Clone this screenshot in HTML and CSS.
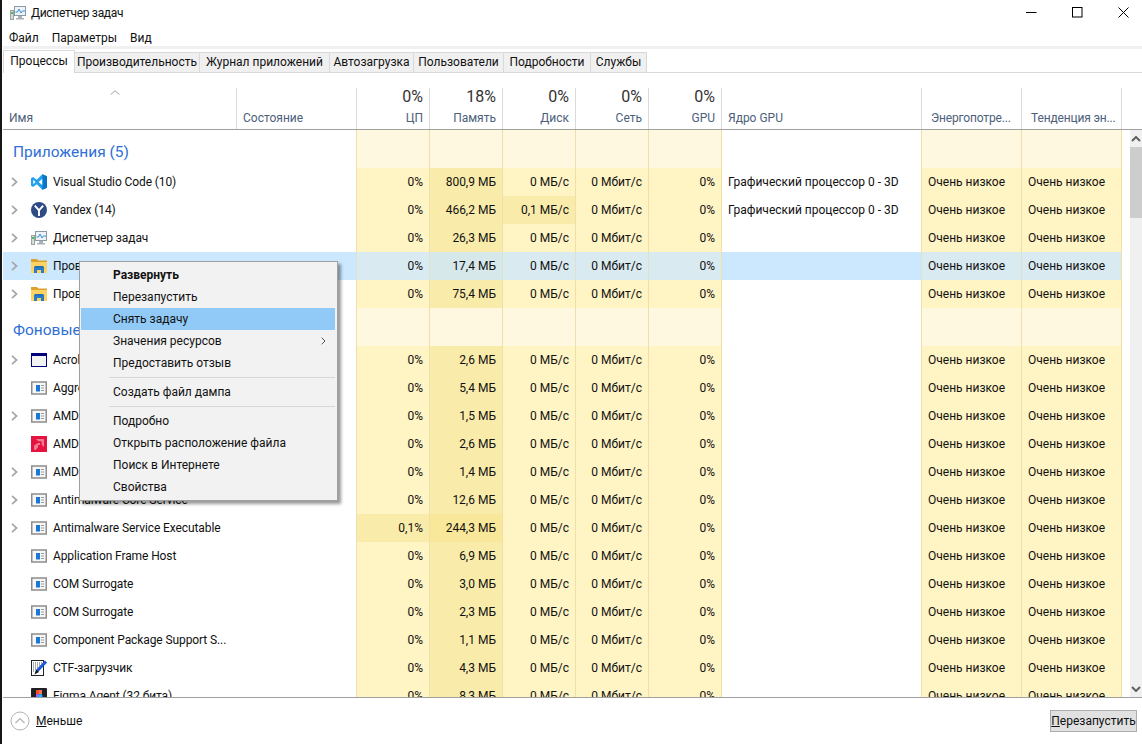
FILE: index.html
```html
<!DOCTYPE html>
<html lang="ru">
<head>
    <meta charset="UTF-8">
    <title>Диспетчер задач</title>
    <link rel="stylesheet" href="styles.css">
</head>
<body>
<!-- иконки -->
<svg class="sprite" xmlns="http://www.w3.org/2000/svg">
    <symbol id="chev" viewBox="0 0 7 10"><path d="M1 .8 5.600 5 1 9.200" fill="none" stroke="#a6a6a6" stroke-width="1.700"/></symbol>
    <symbol id="vscode" viewBox="0 0 100 100">
        <path fill-rule="evenodd" fill="#23a0f0" d="M71 1 36 36 13 19 0 26v48l13 7 23-17 35 35 29-13V14ZM72 29 47 50l25 21ZM14 36v28l14-14Z"/>
        <path fill="#0a76c8" d="M71 1l29 13v72L71 99l1-28V29Z"/>
    </symbol>
    <symbol id="yandex" viewBox="0 0 16 16">
        <circle cx="8" cy="8" r="8" fill="#2f4b85"/>
        <path d="M3.800 3.600 8 8.400l4.200-4.800M8 8.200V14" fill="none" stroke="#fff" stroke-width="1.900"/>
    </symbol>
    <symbol id="taskmgr" viewBox="0 0 16 16">
        <rect x="4.500" y="1.500" width="11" height="9" fill="#eef3f7" stroke="#8e9aa3"/>
        <path d="M5.500 7 7.500 7 9 4l2 4 1.500-2H15" fill="none" stroke="#3a90d6"/>
        <path d="M8 11h4v2h2v1.500H6V13h2Z" fill="#a9b2b8"/>
        <rect x=".5" y="5.500" width="3" height="9" fill="#d6dcd8" stroke="#9aa5a0"/>
        <rect x="1" y="7" width="2" height="2" fill="#3ec45a"/>
    </symbol>
    <symbol id="folder" viewBox="0 0 16 16">
        <path d="M0 1h6l2 2h8v12H0Z" fill="#fdd363"/>
        <path d="M0 1h6l1 1.500h9V4H0Z" fill="#d9a22e"/>
        <path d="M3 9h10v6h-3v-3H6v3H3Z" fill="#2a7cc9"/>
        <path d="M4 8h8l1 1.500H3Z" fill="#1d6ab3"/>
    </symbol>
    <symbol id="app" viewBox="0 0 16 16">
        <rect x=".75" y="2" width="14.500" height="12" fill="#f6f6f6" stroke="#8d8d8d" stroke-width="1.500"/>
        <rect x="5" y="5" width="4" height="6.500" fill="#1878d8"/>
        <path d="M10 5.500h3M10 8h3M10 10.500h3" stroke="#9a9a9a"/>
    </symbol>
    <symbol id="window" viewBox="0 0 16 16">
        <rect x="0" y="1" width="16" height="14" fill="#00007f"/>
        <rect x="1" y="4" width="14" height="10" fill="#f2f2f2"/>
    </symbol>
    <symbol id="amd" viewBox="0 0 16 16">
        <rect width="16" height="16" fill="#e4133f"/>
        <path d="M5 3h8v8l-2.300-2.300V5.300H7.300ZM7 7h2v2H7v2.500L4.500 14H3V9.500Z" fill="#f07a92"/>
    </symbol>
    <symbol id="ctf" viewBox="0 0 16 16">
        <rect x=".5" y=".5" width="12" height="15" fill="#fff" stroke="#222"/>
        <path d="M2 3h9M2 5h7M2 7h5M2 9h4M2 11h2" stroke="#555" stroke-dasharray="1 1"/>
        <path d="M15 1.500 6 11" stroke="#1c57d6" stroke-width="3"/>
        <path d="M3.500 14.500l1.500-5 3 2.500Z" fill="#111"/>
    </symbol>
    <symbol id="figma" viewBox="0 0 16 16">
        <rect width="16" height="16" rx="1" fill="#1f1f24"/>
        <rect x="5" y="2" width="3" height="4" fill="#f24e1e"/>
        <rect x="8" y="2" width="3" height="4" fill="#ff7262"/>
        <rect x="5" y="6" width="3" height="4" fill="#a259ff"/>
        <circle cx="9.500" cy="8" r="2" fill="#1abcfe"/>
        <rect x="5" y="10" width="3" height="4" fill="#0acf83"/>
    </symbol>
</svg>

<div class="window">
    <div class="titlebar">
        <div class="title">
            <svg class="ico"><use href="#taskmgr"/></svg>
            <span>Диспетчер задач</span>
        </div>
        <div class="winbtns">
            <svg width="11" height="11" viewBox="0 0 11 11"><path d="M0 5.500h10.500" stroke="#000"/></svg>
            <svg width="11" height="11" viewBox="0 0 11 11"><rect x=".5" y=".5" width="9.500" height="9.500" fill="none" stroke="#000"/></svg>
            <svg width="11" height="11" viewBox="0 0 11 11"><path d="M.5.500l10 10M10.500.500l-10 10" stroke="#000"/></svg>
        </div>
    </div>

    <div class="menubar">
        <span>Файл</span>
        <span>Параметры</span>
        <span>Вид</span>
    </div>

    <div class="tabs">
        <div class="tab active">Процессы</div>
        <div class="tab">Производительность</div>
        <div class="tab">Журнал приложений</div>
        <div class="tab">Автозагрузка</div>
        <div class="tab">Пользователи</div>
        <div class="tab">Подробности</div>
        <div class="tab">Службы</div>
    </div>

    <div class="head">
        <div class="hcell first">
            <svg class="sort" width="10" height="5" viewBox="0 0 10 5"><path d="M.5 4.500 5 .8l4.500 3.700" fill="none" stroke="#a8a8a8"/></svg>
            <div class="hlabel">Имя</div>
        </div>
        <div class="hcell"><div class="hlabel">Состояние</div></div>
        <div class="hcell right"><div class="hval">0%</div><div class="hlabel">ЦП</div></div>
        <div class="hcell right"><div class="hval">18%</div><div class="hlabel">Память</div></div>
        <div class="hcell right"><div class="hval">0%</div><div class="hlabel">Диск</div></div>
        <div class="hcell right"><div class="hval">0%</div><div class="hlabel">Сеть</div></div>
        <div class="hcell right"><div class="hval">0%</div><div class="hlabel">GPU</div></div>
        <div class="hcell"><div class="hlabel">Ядро GPU</div></div>
        <div class="hcell power"><div class="hlabel">Энергопотре...</div></div>
        <div class="hcell power last"><div class="hlabel">Тенденция эн...</div></div>
    </div>

    <div class="content">
        <div class="rows">
            <div class="row section">
                <div class="name"><span class="group">Приложения (5)</span></div><div></div>
                <div class="num"></div><div class="num"></div><div class="num"></div><div class="num"></div><div class="num"></div>
                <div class="engine"></div><div class="level"></div><div class="level end"></div>
            </div>
            <div class="row">
                <div class="name"><svg class="chev"><use href="#chev"/></svg><svg class="ico"><use href="#vscode"/></svg><span>Visual Studio Code (10)</span></div><div></div>
                <div class="num">0%</div><div class="num hot">800,9 МБ</div><div class="num">0 МБ/с</div><div class="num">0 Мбит/с</div><div class="num">0%</div>
                <div class="engine">Графический процессор 0 - 3D</div><div class="level">Очень низкое</div><div class="level end">Очень низкое</div>
            </div>
            <div class="row">
                <div class="name"><svg class="chev"><use href="#chev"/></svg><svg class="ico"><use href="#yandex"/></svg><span>Yandex (14)</span></div><div></div>
                <div class="num">0%</div><div class="num hot">466,2 МБ</div><div class="num hot">0,1 МБ/с</div><div class="num">0 Мбит/с</div><div class="num">0%</div>
                <div class="engine">Графический процессор 0 - 3D</div><div class="level">Очень низкое</div><div class="level end">Очень низкое</div>
            </div>
            <div class="row">
                <div class="name"><svg class="chev"><use href="#chev"/></svg><svg class="ico"><use href="#taskmgr"/></svg><span>Диспетчер задач</span></div><div></div>
                <div class="num">0%</div><div class="num hot">26,3 МБ</div><div class="num">0 МБ/с</div><div class="num">0 Мбит/с</div><div class="num">0%</div>
                <div class="engine"></div><div class="level">Очень низкое</div><div class="level end">Очень низкое</div>
            </div>
            <div class="row selected">
                <div class="name"><svg class="chev"><use href="#chev"/></svg><svg class="ico"><use href="#folder"/></svg><span>Проводник</span></div><div></div>
                <div class="num">0%</div><div class="num hot">17,4 МБ</div><div class="num">0 МБ/с</div><div class="num">0 Мбит/с</div><div class="num">0%</div>
                <div class="engine"></div><div class="level">Очень низкое</div><div class="level end">Очень низкое</div>
            </div>
            <div class="row">
                <div class="name"><svg class="chev"><use href="#chev"/></svg><svg class="ico"><use href="#folder"/></svg><span>Проводник</span></div><div></div>
                <div class="num">0%</div><div class="num hot">75,4 МБ</div><div class="num">0 МБ/с</div><div class="num">0 Мбит/с</div><div class="num">0%</div>
                <div class="engine"></div><div class="level">Очень низкое</div><div class="level end">Очень низкое</div>
            </div>
            <div class="row section">
                <div class="name"><span class="group">Фоновые процессы</span></div><div></div>
                <div class="num"></div><div class="num"></div><div class="num"></div><div class="num"></div><div class="num"></div>
                <div class="engine"></div><div class="level"></div><div class="level end"></div>
            </div>
            <div class="row">
                <div class="name"><svg class="chev"><use href="#chev"/></svg><svg class="ico"><use href="#window"/></svg><span>Acrobat Update Service</span></div><div></div>
                <div class="num">0%</div><div class="num hot">2,6 МБ</div><div class="num">0 МБ/с</div><div class="num">0 Мбит/с</div><div class="num">0%</div>
                <div class="engine"></div><div class="level">Очень низкое</div><div class="level end">Очень низкое</div>
            </div>
            <div class="row">
                <div class="name"><i class="chev"></i><svg class="ico"><use href="#app"/></svg><span>Aggregator Host</span></div><div></div>
                <div class="num">0%</div><div class="num hot">5,4 МБ</div><div class="num">0 МБ/с</div><div class="num">0 Мбит/с</div><div class="num">0%</div>
                <div class="engine"></div><div class="level">Очень низкое</div><div class="level end">Очень низкое</div>
            </div>
            <div class="row">
                <div class="name"><svg class="chev"><use href="#chev"/></svg><svg class="ico"><use href="#app"/></svg><span>AMD Crash Defender</span></div><div></div>
                <div class="num">0%</div><div class="num hot">1,5 МБ</div><div class="num">0 МБ/с</div><div class="num">0 Мбит/с</div><div class="num">0%</div>
                <div class="engine"></div><div class="level">Очень низкое</div><div class="level end">Очень низкое</div>
            </div>
            <div class="row">
                <div class="name"><i class="chev"></i><svg class="ico"><use href="#amd"/></svg><span>AMD Software</span></div><div></div>
                <div class="num">0%</div><div class="num hot">2,6 МБ</div><div class="num">0 МБ/с</div><div class="num">0 Мбит/с</div><div class="num">0%</div>
                <div class="engine"></div><div class="level">Очень низкое</div><div class="level end">Очень низкое</div>
            </div>
            <div class="row">
                <div class="name"><svg class="chev"><use href="#chev"/></svg><svg class="ico"><use href="#app"/></svg><span>AMD External Events</span></div><div></div>
                <div class="num">0%</div><div class="num hot">1,4 МБ</div><div class="num">0 МБ/с</div><div class="num">0 Мбит/с</div><div class="num">0%</div>
                <div class="engine"></div><div class="level">Очень низкое</div><div class="level end">Очень низкое</div>
            </div>
            <div class="row">
                <div class="name"><svg class="chev"><use href="#chev"/></svg><svg class="ico"><use href="#app"/></svg><span>Antimalware Core Service</span></div><div></div>
                <div class="num">0%</div><div class="num hot">12,6 МБ</div><div class="num">0 МБ/с</div><div class="num">0 Мбит/с</div><div class="num">0%</div>
                <div class="engine"></div><div class="level">Очень низкое</div><div class="level end">Очень низкое</div>
            </div>
            <div class="row">
                <div class="name"><svg class="chev"><use href="#chev"/></svg><svg class="ico"><use href="#app"/></svg><span>Antimalware Service Executable</span></div><div></div>
                <div class="num hot">0,1%</div><div class="num hotter">244,3 МБ</div><div class="num">0 МБ/с</div><div class="num">0 Мбит/с</div><div class="num">0%</div>
                <div class="engine"></div><div class="level">Очень низкое</div><div class="level end">Очень низкое</div>
            </div>
            <div class="row">
                <div class="name"><i class="chev"></i><svg class="ico"><use href="#app"/></svg><span>Application Frame Host</span></div><div></div>
                <div class="num">0%</div><div class="num hot">6,9 МБ</div><div class="num">0 МБ/с</div><div class="num">0 Мбит/с</div><div class="num">0%</div>
                <div class="engine"></div><div class="level">Очень низкое</div><div class="level end">Очень низкое</div>
            </div>
            <div class="row">
                <div class="name"><i class="chev"></i><svg class="ico"><use href="#app"/></svg><span>COM Surrogate</span></div><div></div>
                <div class="num">0%</div><div class="num hot">3,0 МБ</div><div class="num">0 МБ/с</div><div class="num">0 Мбит/с</div><div class="num">0%</div>
                <div class="engine"></div><div class="level">Очень низкое</div><div class="level end">Очень низкое</div>
            </div>
            <div class="row">
                <div class="name"><i class="chev"></i><svg class="ico"><use href="#app"/></svg><span>COM Surrogate</span></div><div></div>
                <div class="num">0%</div><div class="num hot">2,3 МБ</div><div class="num">0 МБ/с</div><div class="num">0 Мбит/с</div><div class="num">0%</div>
                <div class="engine"></div><div class="level">Очень низкое</div><div class="level end">Очень низкое</div>
            </div>
            <div class="row">
                <div class="name"><i class="chev"></i><svg class="ico"><use href="#app"/></svg><span>Component Package Support S...</span></div><div></div>
                <div class="num">0%</div><div class="num hot">1,1 МБ</div><div class="num">0 МБ/с</div><div class="num">0 Мбит/с</div><div class="num">0%</div>
                <div class="engine"></div><div class="level">Очень низкое</div><div class="level end">Очень низкое</div>
            </div>
            <div class="row">
                <div class="name"><i class="chev"></i><svg class="ico"><use href="#ctf"/></svg><span>CTF-загрузчик</span></div><div></div>
                <div class="num">0%</div><div class="num hot">4,3 МБ</div><div class="num">0 МБ/с</div><div class="num">0 Мбит/с</div><div class="num">0%</div>
                <div class="engine"></div><div class="level">Очень низкое</div><div class="level end">Очень низкое</div>
            </div>
            <div class="row">
                <div class="name"><i class="chev"></i><svg class="ico"><use href="#figma"/></svg><span>Figma Agent (32 бита)</span></div><div></div>
                <div class="num">0%</div><div class="num hot">8,3 МБ</div><div class="num">0 МБ/с</div><div class="num">0 Мбит/с</div><div class="num">0%</div>
                <div class="engine"></div><div class="level">Очень низкое</div><div class="level end">Очень низкое</div>
            </div>
        </div>
        <div class="scrollbar">
            <div class="sb-btn"><svg width="10" height="6" viewBox="0 0 10 6"><path d="M1 5 5 1l4 4" fill="none" stroke="#606060" stroke-width="2"/></svg></div>
            <div class="sb-thumb"></div>
            <div class="sb-track"></div>
            <div class="sb-btn"><svg width="10" height="6" viewBox="0 0 10 6"><path d="M1 1l4 4 4-4" fill="none" stroke="#606060" stroke-width="2"/></svg></div>
        </div>
    </div>

    <div class="footer">
        <div class="less">
            <svg width="20" height="20" viewBox="0 0 20 20"><circle cx="10" cy="10" r="9" fill="#fff" stroke="#b4b4b4"/><path d="M5.500 12 10 7.500l4.500 4.500" fill="none" stroke="#b4b4b4" stroke-width="1.200"/></svg>
            <span><u>М</u>еньше</span>
        </div>
        <button class="restart"><u>П</u>ерезапустить</button>
    </div>

    <!-- контекстное меню -->
    <div class="ctx">
        <div class="ctx-item bold">Развернуть</div>
        <div class="ctx-item">Перезапустить</div>
        <div class="ctx-item hover">Снять задачу</div>
        <div class="ctx-item">Значения ресурсов
            <svg width="5" height="8" viewBox="0 0 5 8"><path d="M.7.700 4 4 .7 7.300" fill="none" stroke="#555"/></svg>
        </div>
        <div class="ctx-item">Предоставить отзыв</div>
        <div class="ctx-sep"></div>
        <div class="ctx-item">Создать файл дампа</div>
        <div class="ctx-sep"></div>
        <div class="ctx-item">Подробно</div>
        <div class="ctx-item">Открыть расположение файла</div>
        <div class="ctx-item">Поиск в Интернете</div>
        <div class="ctx-item">Свойства</div>
    </div>
</div>
</body>
</html>
```

FILE: styles.css
```css
body {
    margin: 0;
    background: #fff;
    font-family: Roboto, "Open Sans", sans-serif;
    font-size: 12px;
    color: #111;
    overflow: hidden;
}

.sprite {
    display: none;
}

.window {
    position: relative;
    box-sizing: border-box;
    width: 1142px;
    height: 744px;
    padding-left: 1px;
    border-left: 2px solid #161616;
    display: flex;
    flex-direction: column;
    overflow: hidden;
}

/* заголовок окна */
.titlebar {
    height: 28px;
    flex: none;
    display: flex;
    justify-content: space-between;
    align-items: center;
}

.title {
    display: flex;
    align-items: center;
    gap: 5px;
    padding: 0 0 2px 7px;
    letter-spacing: -0.3px;
}

.winbtns {
    display: flex;
    gap: 35px;
    padding: 0 13px 3px 0;
}

.menubar {
    height: 18px;
    flex: none;
    box-sizing: border-box;
    display: flex;
    align-items: center;
    gap: 13px;
    padding: 2px 0 0 6px;
}

/* вкладки */
.tabs {
    height: 27px;
    flex: none;
    box-sizing: border-box;
    border-top: 3px solid #f0f0f0;
    border-bottom: 1px solid #d9d9d9;
    display: grid;
    grid-template-columns: 72px 125px 130px 84px 90px 87px 56px;
    align-items: end;
}

.tab {
    height: 19px;
    line-height: 19px;
    background: #f0f0f0;
    border-top: 1px solid #d9d9d9;
    border-right: 1px solid #d9d9d9;
    text-align: center;
    white-space: nowrap;
}

.tab.active {
    height: 22px;
    line-height: 21px;
    margin-bottom: -1px;
    background: #fff;
    border-left: 1px solid #d9d9d9;
}

/* шапка таблицы */
.head,
.row {
    display: grid;
    grid-template-columns: 233px 120px repeat(5, 73px) 200px 100px 101px;
}

.head {
    height: 42px;
    flex: none;
    margin-top: 15px;
    box-sizing: border-box;
    border-bottom: 1px solid #a0a0a0;
}

.hcell {
    display: flex;
    flex-direction: column;
    padding: 0 6px;
    border-left: 1px solid #dadada;
    color: #4c607a;
}

.hcell.first {
    border-left: none;
}

.hcell.last {
    border-right: 1px solid #dadada;
}

.hcell.right {
    text-align: right;
}

.hcell.power {
    padding-left: 9px;
    letter-spacing: -0.15px;
}

.hval {
    font-size: 16px;
    line-height: 18px;
    color: #333;
}

.hlabel {
    margin-top: auto;
    line-height: 16px;
    padding-bottom: 3px;
    white-space: nowrap;
}

.sort {
    margin: 2px 0 0 101px;
}

/* строки */
.content {
    flex: 1;
    min-height: 0;
    display: flex;
}

.rows {
    flex: 1;
    overflow: hidden;
}

.row {
    width: max-content;
    height: 28px;
    line-height: 28px;
}

.row.section {
    height: 38px;
}

.name {
    display: flex;
    align-items: center;
    padding-left: 8px;
    white-space: nowrap;
    letter-spacing: -0.1px;
}

.chev {
    display: block;
    width: 7px;
    height: 10px;
    margin-right: 13px;
    flex: none;
}

.name .ico {
    margin-right: 6px;
}

.ico {
    width: 16px;
    height: 16px;
    flex: none;
}

.group {
    padding: 6px 0 0 2px;
    font-size: 15.5px;
    letter-spacing: 0;
    color: #2f6fd6;
}

.num {
    background: #fff4c4;
    border-left: 1px solid #f1dfa9;
    padding-right: 6px;
    text-align: right;
}

.hot {
    background: #f9ecaa;
}

.hotter {
    background: #f9e79a;
}

.engine {
    border-left: 1px solid #f1dfa9;
    padding-left: 6px;
    white-space: nowrap;
}

.level {
    background: #fff4c4;
    border-left: 1px solid #f1dfa9;
    padding-left: 6px;
}

.level.end {
    border-right: 1px solid #f1dfa9;
}

.section .num,
.section .level {
    background: #fff8e1;
}

.selected {
    background: #cce8ff;
}

.selected .num,
.selected .level {
    background: #d9eaf0;
    border-left-color: #dde2cf;
}

.selected .hot {
    background: #d6e8ea;
}

/* полоса прокрутки */
.scrollbar {
    width: 12px;
    flex: none;
    background: #f0f0f0;
    display: flex;
    flex-direction: column;
}

.sb-btn {
    height: 17px;
    display: flex;
    align-items: center;
    justify-content: center;
}

.sb-thumb {
    height: 71px;
    background: #cdcdcd;
}

.sb-track {
    flex: 1;
}

/* низ окна */
.footer {
    height: 47px;
    flex: none;
    box-sizing: border-box;
    border-top: 1px solid #a0a0a0;
    background: #fff;
    display: flex;
    justify-content: space-between;
    align-items: center;
    padding: 0 5px 0 7px;
}

.less {
    display: flex;
    align-items: center;
    gap: 6px;
}

.restart {
    width: 87px;
    height: 22px;
    padding: 0;
    background: #e1e1e1;
    border: 1px solid #adadad;
    font: inherit;
    color: #111;
}

/* контекстное меню */
.ctx {
    position: absolute;
    left: 77px;
    top: 261px;
    width: 259px;
    box-sizing: border-box;
    padding: 2px 2px 2px 1px;
    background: #f2f2f2;
    border: 1px solid #a0a0a0;
    box-shadow: 3px 3px 3px rgba(0, 0, 0, 0.4);
}

.ctx-item {
    position: relative;
    height: 22px;
    line-height: 22px;
    padding-left: 32px;
}

.ctx-item svg {
    position: absolute;
    right: 9px;
    top: 7px;
}

.ctx-item.bold {
    font-weight: 700;
}

.ctx-item.hover {
    background: #91c9f7;
}

.ctx-sep {
    height: 1px;
    margin: 3px 0 3px 28px;
    background: #d7d7d7;
}
```
